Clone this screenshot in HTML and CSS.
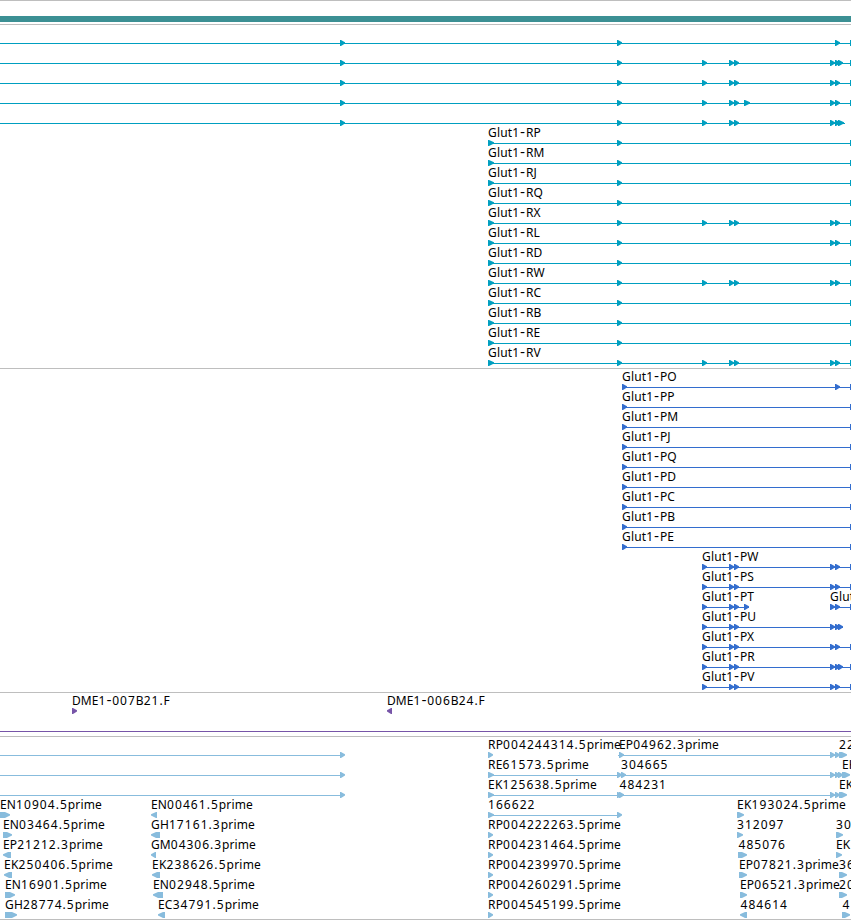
FILE: index.html
```html
<!DOCTYPE html>
<html lang="en">
<head>
<meta charset="utf-8">
<title>Genome browser</title>
<link rel="stylesheet" href="styles.css">
</head>
<body>
<main class="browser">
  <header class="contig"><div class="contig-bar"></div></header>
  <section class="track transcripts" data-track="transcripts"></section>
  <section class="track proteins" data-track="proteins"></section>
  <section class="track clones" data-track="clones"></section>
  <section class="track ests" data-track="ests"></section>
</main>
<script src="tracks.js"></script>
</body>
</html>
```
FILE: styles.css
```css
body {
  margin: 0;
  background: #fff;
}

.browser {
  display: flex;
  flex-direction: column;
  width: 851px;
  height: 920px;
  overflow: hidden;
}

.contig {
  box-sizing: border-box;
  height: 24px;
  padding-top: 15px;
  border-top: 1px solid #bebebe;
}

.contig-bar {
  height: 6px;
  background: #3c9094;
}

.track {
  display: flex;
  flex-direction: column;
  padding-top: 1px;
  border-top: 1px solid #bebebe;
}

.transcripts { color: #009fc0; padding-bottom: 2px; }
.proteins { color: #336dce; padding-bottom: 2px; }
.clones { color: #7755a8; height: 42px; }
.ests { color: #88bcdd; padding-bottom: 1px; border-bottom: 1px solid #bebebe; }

.row {
  display: block;
  flex: none;
  width: 851px;
  height: 20px;
  overflow: visible;
}

.row path,
.row rect {
  fill: currentColor;
}

.row text {
  fill: #000;
  font-family: "Noto Sans", "DejaVu Sans", sans-serif;
  font-size: 12px;
  letter-spacing: 0.15px;
}

.row .digits {
  letter-spacing: 1.05px;
}

.row .dash {
  font-family: "DejaVu Sans", sans-serif;
  font-size: 14px;
  letter-spacing: 0.7px;
}
```
FILE: tracks.js
```js
// Row: { t: [[x, label, width]], l: [[x1, x2]], f: [[x, width, direction]] }
const f5 = (...xs) => xs.map(x => [x, 5, 1]);
const edge = [850, 1, 0];
const full = [0, 851];

const transcripts = [
  { l: [full], f: [...f5(340, 617, 835), edge] },
  { l: [full], f: [...f5(340, 617, 702, 729, 734, 830, 835, 838), edge] },
  { l: [full], f: [...f5(340, 617, 702, 729, 734, 830, 835), edge] },
  { l: [full], f: [...f5(340, 617, 702, 729, 734, 830, 835), [744, 6, 1], edge] },
  { l: [[0, 845]], f: [...f5(340, 617, 702, 729, 734, 830, 835), [838, 6, 1]] }
];
const more = { RX: [702, 729, 734, 830, 835], RL: [830, 835], RW: [702, 729, 734, 830, 835], RV: [702, 729, 734, 830, 835] };
for (const n of "RP RM RJ RQ RX RL RD RW RC RB RE RV".split(" ")) {
  transcripts.push({ t: [[488, "Glut1-" + n]], l: [[488, 851]], f: [[488, 6, 1], ...f5(617, ...(more[n] || [])), edge] });
}

const proteins = "PO PP PM PJ PQ PD PC PB PE".split(" ").map(n => ({
  t: [[622, "Glut1-" + n]], l: [[622, 851]], f: [...f5(622), ...(n === "PO" ? f5(835) : []), edge]
}));
for (const n of "PW PS PT PU PX PR PV".split(" ")) {
  const row = { t: [[702, "Glut1-" + n]], l: [[702, 851]], f: [...f5(702, 729, 734, 830, 835), edge] };
  if (n === "PT") {
    row.t.push([830, "Glut"]);
    row.l = [[702, 749], [830, 851]];
    row.f.push([744, 5, 1]);
  }
  if (n === "PU") {
    row.l = [[702, 843]];
    row.f.pop();
  }
  if (n === "PU" || n === "PR") row.f.push([838, 5, 1]);
  proteins.push(row);
}

const clones = [
  { t: [[72, "DME1-007B21.F", 98], [387, "DME1-006B24.F", 98]], f: [[72, 5, 1], [387, 5, -1]] },
  { l: [full] }
];

const ests = [
  { t: [[488, "RP004244314.5prime", 133], [619, "EP04962.3prime", 100], [839, "22"]],
    l: [[0, 340], [618, 840]], f: [...f5(340, 488, 619, 830, 835), [839, 8, 1]] },
  { t: [[488, "RE61573.5prime", 101], [621, "304665"], [842, "EK"]],
    l: [[0, 340], [488, 845]], f: [...f5(340), [488, 6, 1], ...f5(617, 621, 830, 835, 838), [842, 8, 1]] },
  { t: [[488, "EK125638.5prime", 109], [619.5, "484231"], [839, "EK"]],
    l: [[0, 340], [488, 842]], f: [...f5(340), [488, 6, 1], ...f5(617, 619, 830, 835), [839, 8, 1]] },
  { t: [[0, "EN10904.5prime", 102], [151, "EN00461.5prime", 102], [488, "166622"], [737, "EK193024.5prime", 109]],
    l: [[488, 620]], f: [[0, 10, 1], [151, 6, -1], [488, 6, 1], [617, 5, 1], [737, 7, 1]] },
  { t: [[3, "EN03464.5prime", 102], [151, "GH17161.3prime", 104], [488, "RP004222263.5prime", 133], [737, "312097"], [836, "30"]],
    f: [[3, 9, 1], [151, 9, -1], [488, 5, 1], [737, 6, 1], [836, 7, 1]] },
  { t: [[3, "EP21212.3prime", 100], [151, "GM04306.3prime", 105], [488, "RP004231464.5prime", 133], [738.5, "485076"], [836, "EK"]],
    f: [[3, 8, -1], [151, 5, -1], [488, 5, 1], [738, 9, 1], [836, 6, 1]] },
  { t: [[4, "EK250406.5prime", 109], [152, "EK238626.5prime", 109], [488, "RP004239970.5prime", 133], [739, "EP07821.3prime", 100], [839, "36"]],
    f: [[4, 8, -1], [152, 8, -1], [488, 5, 1], [739, 8, 1], [839, 8, 1]] },
  { t: [[5, "EN16901.5prime", 102], [153, "EN02948.5prime", 102], [488, "RP004260291.5prime", 133], [740, "EP06521.3prime", 100], [839, "20"]],
    f: [[5, 10, 1], [153, 10, -1], [488, 5, 1], [740, 7, 1], [839, 8, 1]] },
  { t: [[5, "GH28774.5prime", 104], [158, "EC34791.5prime", 101], [488, "RP004545199.5prime", 133], [740.5, "484614"], [842.5, "4"]],
    f: [[5, 12, 1], [158, 7, -1], [488, 5, 1], [740, 7, -1], [842, 8, 1]] }
];

function feature([x, w, dir]) {
  if (!dir) return `<rect x="${x}" y="14" width="${w}" height="6"/>`;
  const tip = Math.min(w - 1, 5);
  const a = dir > 0 ? x : x + w;
  const b = a + dir * (w - tip);
  const c = a + dir * w;
  return `<path d="M${a} 14H${b}L${c} 16.2V17.6L${b} 20H${a}Z"/>`;
}

function styled(label) {
  return label
    .replace(/[0-9.]+/g, '<tspan class="digits">$&</tspan>')
    .replace(/-/g, '<tspan class="dash">-</tspan>');
}

function draw(row) {
  const lines = (row.l || []).map(([a, b]) => `<rect x="${a}" y="17" width="${b - a}" height="1"/>`);
  const labels = (row.t || []).map(([x, s, w]) => `<text x="${x}" y="11"${w ? ` textLength="${w}"` : ""}>${styled(s)}</text>`);
  return `<svg class="row" viewBox="0 0 851 20">${lines.join("")}${(row.f || []).map(feature).join("")}${labels.join("")}</svg>`;
}

const tracks = { transcripts, proteins, clones, ests };
document.querySelectorAll("[data-track]").forEach(el => {
  el.innerHTML = tracks[el.dataset.track].map(draw).join("");
});
```
